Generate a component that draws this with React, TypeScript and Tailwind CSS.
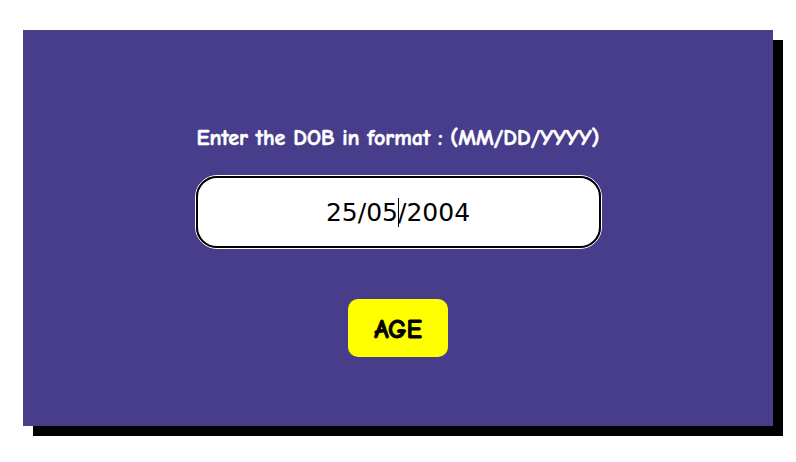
export default function App() {
  const comic = { fontFamily: '"Comic Sans MS", "Comic Neue", "Open Sans", sans-serif' };
  return (
    <div className="min-h-screen bg-white pl-[23px] pt-[30px]">
      <div
        className="flex h-[396px] w-[750px] flex-col items-center bg-[#483d8b] shadow-[10px_10px_0_#000]"
        style={comic}
      >
        <p className="mt-[95px] text-[22px] font-bold leading-[26px] text-white [-webkit-text-stroke:0.6px_white]">
          Enter the DOB in format : (MM/DD/YYYY)
        </p>
        <div className="mt-[24px] rounded-[22px] border border-white">
          <div className="flex h-[72px] w-[405px] items-center justify-center rounded-[21px] border-2 border-black bg-white">
            <span className="font-['DejaVu_Sans',sans-serif] text-[25px] text-black">
              25/05<span className="mx-[-0.5px] inline-block h-[29px] w-px translate-y-[6px] bg-black align-baseline" />/2004
            </span>
          </div>
        </div>
        <button className="mt-[50px] h-[58px] w-[100px] rounded-[10px] bg-[#ffff00] pt-[4px] text-[26px] font-bold text-black [-webkit-text-stroke:0.9px_black]">
          AGE
        </button>
      </div>
    </div>
  );
}
